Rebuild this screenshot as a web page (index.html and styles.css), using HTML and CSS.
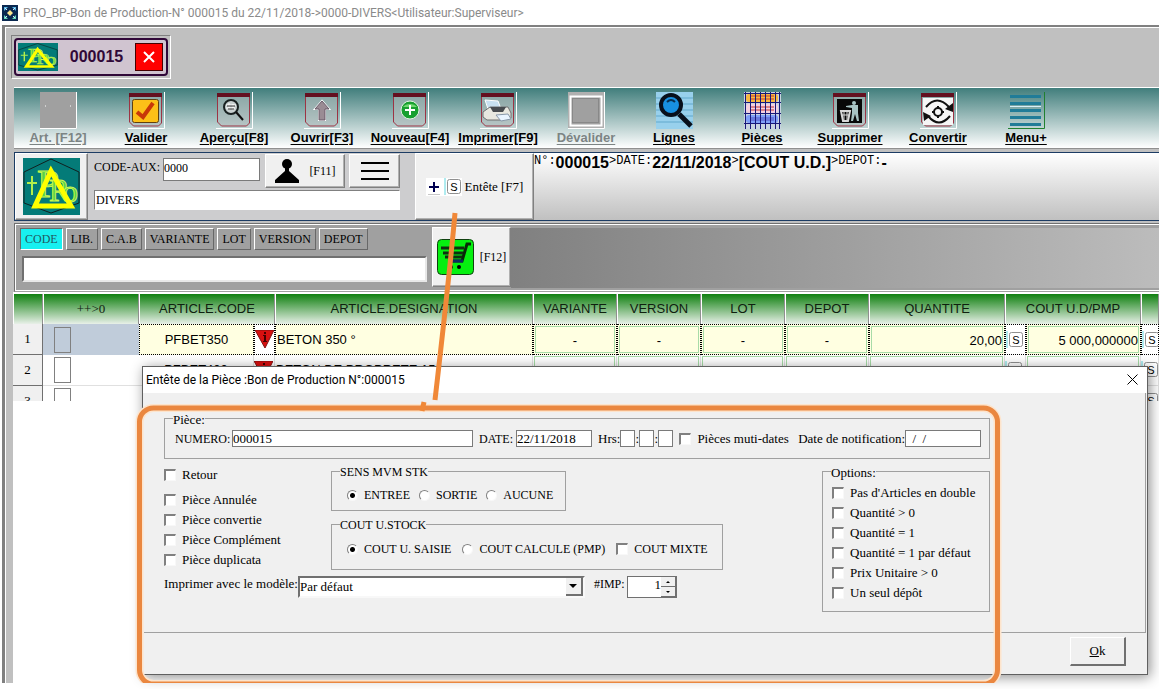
FILE: index.html
```
<!DOCTYPE html>
<html lang="fr">
<head>
<meta charset="utf-8">
<title>PRO_BP-Bon de Production</title>
<link rel="stylesheet" href="styles.css">
</head>
<body>
<svg class="defs" width="0" height="0" aria-hidden="true">
  <defs>
    <symbol id="logo" viewBox="0 0 57 57" preserveAspectRatio="none">
      <rect width="57" height="57" fill="#047b78"/>
      <path d="M28 1 56 14v31L28 55 1 45V14z" fill="none" stroke="#102020"/>
      <text x="14" y="39" font-size="40" class="logo-text">P</text>
      <text x="26" y="43" font-size="31" class="logo-text">R</text>
      <text x="39" y="44" font-size="32" class="logo-text">o</text>
      <path d="M4 25h10M9 18v19" stroke="#b4f04a" stroke-width="2"/>
      <path d="M28 13 12 48h36z" fill="none" stroke="#ff0" stroke-width="5"/>
    </symbol>
    <symbol id="sheet" viewBox="0 0 37 37">
      <path d="M0 36.5h36.5V0" fill="none" stroke="#fff"/>
      <path d="M1.500 3v27l4 4h25l3-3V3z" fill="#b4bcbc" fill-opacity=".55" stroke="#9c3444"/>
      <path d="M1 1h33v4H1z" fill="#641020"/>
    </symbol>
    <symbol id="warn" viewBox="0 0 19 19">
      <path d="M0 0h19L10 18z" fill="#d81010" stroke="#801010"/>
      <path d="M9 2h2v2H9zM8 5h3v6h1v1H8v-1h1V6H8z" fill="#400"/>
    </symbol>
    <symbol id="skey" viewBox="0 0 18 18">
      <path d="M1 0v17" stroke="#60d8e0"/>
      <rect x="3.500" y="1.500" width="13" height="14" rx="2" fill="#fff" stroke="#909090"/>
      <text x="10" y="13" text-anchor="middle" font-size="11" class="key-text">S</text>
    </symbol>
  </defs>
</svg>

<header class="titlebar">
  <svg width="16" height="16" viewBox="0 0 16 16"><rect width="16" height="16" fill="#0a2850"/><path d="M2 2h4L2 6zM14 2v4l-4-4z" fill="#58b8e8"/><path d="M2 14v-4l4 4zM14 14h-4l4-4z" fill="#60d8b8"/><path d="M8 5l3 3-3 3-3-3z" fill="#ffe890"/><path d="M3 3l2 2M13 3l-2 2M3 13l2-2M13 13l-2-2" stroke="#d8ecf8"/></svg>
  <h1>PRO_BP-Bon de Production-N° 000015 du 22/11/2018-&gt;0000-DIVERS&lt;Utilisateur:Superviseur&gt;</h1>
</header>

<main class="frame">
  <div class="docs">
    <div class="doc-slot"><div class="doc">
      <svg width="40" height="28"><use href="#logo" width="40" height="28"/></svg>
      <span class="doc-no">000015</span>
      <button class="doc-close" aria-label="Fermer"><svg width="12" height="12" viewBox="0 0 12 12"><path d="M1 1l10 10M11 1 1 11" stroke="#fff" stroke-width="2"/></svg></button>
    </div></div>
  </div>

  <nav class="toolbar">
    <button class="tool" disabled><svg width="37" height="37" viewBox="0 0 37 37"><rect width="37" height="37" fill="#a0a0a0"/><path d="M0 36.500h36.500V0" fill="none" stroke="#fff"/><path d="M5 14h1M30 14h1" stroke="#fff"/></svg>Art. [F12]</button>
    <button class="tool"><svg width="37" height="37" viewBox="0 0 37 37"><use href="#sheet"/><rect x="4.500" y="7.500" width="26" height="23" rx="2" fill="#fcc018" stroke="#604010"/><path d="M9 20l6 5L25 11" fill="none" stroke="#c83808" stroke-width="4"/></svg>Valider</button>
    <button class="tool"><svg width="37" height="37" viewBox="0 0 37 37"><use href="#sheet"/><circle cx="15" cy="15" r="7" fill="#c8d0d0" stroke="#182020" stroke-width="2"/><path d="M10 13h10M10 16h9M13 11v7M17 12v6" stroke="#fff"/><path d="M11 14h8M12 17h6" stroke="#333"/><path d="M20 20l7 8" stroke="#101010" stroke-width="2"/></svg>Aperçu[F8]</button>
    <button class="tool"><svg width="37" height="37" viewBox="0 0 37 37"><use href="#sheet"/><path d="M18 9l7 8h-4v11h-6V17h-4z" fill="#9a8c94" stroke="#fff" stroke-width="2"/><path d="M18 9l7 8h-4v11h-6V17h-4z" fill="#9a8c94" stroke="#685868"/></svg>Ouvrir[F3]</button>
    <button class="tool"><svg width="37" height="37" viewBox="0 0 37 37"><use href="#sheet"/><circle cx="18" cy="18" r="9" fill="#18a030" stroke="#e0f4e0"/><path d="M11 15a8 6 0 0 1 14 0z" fill="#70d870"/><path d="M13 18h10M18 13v10" stroke="#fff" stroke-width="2"/></svg>Nouveau[F4]</button>
    <button class="tool"><svg width="37" height="37" viewBox="0 0 37 37"><use href="#sheet"/><path d="M5 8l13 1 3 8H8z" fill="#c8e0f0" stroke="#fff"/><path d="M3 20l7-5h18l3 6v5l-8 2H7l-4-3z" fill="#e8e8e0" stroke="#707070"/><path d="M10 15h16l-3 5H13z" fill="#484c50"/><path d="M16 23l12-1 3 5-10 2z" fill="#e8f4ff" stroke="#8898a8"/></svg>Imprimer[F9]</button>
    <button class="tool" disabled><svg width="37" height="37" viewBox="0 0 37 37"><rect width="37" height="37" fill="#b0b0b0"/><rect x="2.500" y="4.500" width="31" height="29" fill="#a0a0a0" stroke="#fff" stroke-width="2"/><rect x="4.500" y="6.500" width="26" height="24" fill="none" stroke="#888"/><path d="M0 36.500h36.500V0" fill="none" stroke="#fff"/></svg>Dévalider</button>
    <button class="tool"><svg width="37" height="37" viewBox="0 0 37 37"><rect width="37" height="37" fill="#98d0ec"/><path d="M0 6h37M0 12h37M0 18h37M0 24h37M0 30h37" stroke="#60a8cc"/><circle cx="15" cy="13" r="10" fill="#1890e0" stroke="#08101c" stroke-width="4"/><path d="M11 10q4-4 8 0" stroke="#083050" stroke-width="2" fill="none"/><path d="M23 22l12 12" stroke="#08101c" stroke-width="5"/></svg>Lignes</button>
    <button class="tool"><svg width="37" height="37" viewBox="0 0 37 37"><rect width="37" height="37" fill="#c8d4e0"/><rect x="2" y="2" width="32" height="8" rx="3" fill="#f8b840"/><rect x="2" y="12" width="32" height="9" rx="3" fill="#f4d0e0"/><rect x="2" y="23" width="32" height="8" rx="3" fill="#80a0f8"/><path d="M6 4h24M6 7h24M6 15h24M6 18h24" stroke="#c03838"/><path d="M6 26h24M6 28h24" stroke="#5050c0"/><path d="M1.500 0v37M6.500 0v37M11.500 0v37M16.500 0v37M21.500 0v37M26.500 0v37M31.500 0v37M35.500 0v37M0 1.500h37M0 10.500h37M0 21.500h37M0 31.500h37" stroke="#181878"/></svg>Pièces</button>
    <button class="tool"><svg width="37" height="37" viewBox="0 0 37 37"><use href="#sheet"/><rect x="5" y="7" width="25" height="24" fill="#080808"/><path d="M9 19h9l-2 10h-5z" fill="none" stroke="#d8d8d8" stroke-width="2"/><path d="M10 23h7M12 19v9M15 19v9" stroke="#d8d8d8"/><circle cx="22" cy="11" r="2" fill="#a8c4c4"/><path d="M14 14l6-1h6v8l1 8h-2l-2-7-2 7h-2l1-8v-5l-6-1z" fill="#a8c4c4"/></svg>Supprimer</button>
    <button class="tool"><svg width="37" height="37" viewBox="0 0 37 37"><use href="#sheet"/><rect x="3" y="6" width="30" height="27" fill="#f6f6f6"/><path d="M6 15q11-13 23 0M30 24q-11 13-22 0" fill="none" stroke="#101010" stroke-width="2"/><path d="M33 11v9l-8-3zM3 20l8 4-7 5z" fill="#101010"/><circle cx="18" cy="20" r="4" fill="none" stroke="#101010" stroke-width="2"/><path d="M18 14v2M18 24v2M12 20h2M22 20h2" stroke="#101010" stroke-width="2"/></svg>Convertir</button>
    <button class="tool"><svg width="37" height="37" viewBox="0 0 37 37"><path d="M2 3h31v3H2zM2 10h31v3H2zM2 17h31v3H2zM2 24h31v3H2zM2 31h31v3H2z" fill="#207c98"/><path d="M2 14.500h31" stroke="#d8f0f8"/><path d="M0 36.500h36.500V0" fill="none" stroke="#208030"/></svg>Menu+</button>
  </nav>

  <section class="head">
    <button class="face logo-btn" aria-label="Logo"><svg width="57" height="57"><use href="#logo" width="57" height="57"/></svg></button>
    <div class="client">
      <div class="client-row">
        <label for="aux">CODE-AUX:</label><input id="aux" class="field aux" value="0000">
        <button class="face f11"><svg width="26" height="26" viewBox="0 0 26 26"><circle cx="13" cy="6" r="5"/><path d="M11 10h4v3l10 9v3H1v-3l10-9z"/></svg>[F11]</button>
        <button class="face burger" aria-label="Menu"><svg width="28" height="20" viewBox="0 0 28 20"><path d="M0 2h28M0 10h28M0 18h28" stroke="#000" stroke-width="2"/></svg></button>
      </div>
      <input class="field client-name" aria-label="Client" value="DIVERS">
    </div>
    <button class="face entete"><svg width="36" height="18" viewBox="0 0 36 18"><rect width="36" height="18" fill="#fff"/><path d="M3 9h10M8 4v10" stroke="#000050" stroke-width="2"/><path d="M2 16.500h12" stroke="#c8c8c8"/><use href="#skey" x="18" width="18" height="18"/></svg>Entête [F7]</button>
    <p class="info"><small>N°:</small><b>000015</b><small>&gt;DATE:</small><b>22/11/2018</b><small>&gt;</small><b>[COUT U.D.]</b><small>&gt;DEPOT:</small><b>-</b></p>
  </section>

  <section class="search">
    <div class="search-left">
      <div class="modes">
        <button class="mode active">CODE</button><button class="mode">LIB.</button><button class="mode">C.A.B</button><button class="mode">VARIANTE</button><button class="mode">LOT</button><button class="mode">VERSION</button><button class="mode">DEPOT</button>
      </div>
      <input class="query" aria-label="Recherche">
    </div>
    <button class="face cart"><svg width="37" height="36" viewBox="0 0 37 36"><rect x=".5" y=".5" width="36" height="35" rx="4" fill="#06f010" stroke="#104010"/><path d="M34 5h-4l-5 17H12" fill="none" stroke="#082808" stroke-width="3"/><path d="M4 9h23M6 14h20M8 18h17" stroke="#103010" stroke-width="3"/><path d="M11 22h15" stroke="#102860" stroke-width="3"/><circle cx="14" cy="28" r="2"/><circle cx="22" cy="28" r="2"/></svg>[F12]</button>
    <div class="search-fill"></div>
  </section>

  <div class="grid">
    <table>
      <colgroup><col class="c-num"><col class="c-sel"><col class="c-code"><col class="c-ico"><col class="c-des"><col class="c-s"><col class="c-s"><col class="c-s"><col class="c-s"><col class="c-qty"><col class="c-key"><col class="c-cost"><col></colgroup>
      <thead><tr><th></th><th class="serif">++&gt;0</th><th colspan="2">ARTICLE.CODE</th><th>ARTICLE.DESIGNATION</th><th>VARIANTE</th><th>VERSION</th><th>LOT</th><th>DEPOT</th><th>QUANTITE</th><th colspan="2">COUT U.D/PMP</th><th></th></tr></thead>
      <tbody>
        <tr class="current"><td class="num">1</td><td class="sel"><input type="checkbox" class="pick" aria-label="Ligne 1"></td><td class="mid">PFBET350</td><td class="ico"><svg width="19" height="19"><use href="#warn"/></svg></td><td>BETON 350 °</td><td class="box"><span>-</span></td><td class="box"><span>-</span></td><td class="box"><span>-</span></td><td class="box"><span>-</span></td><td class="box right"><span>20,00</span></td><td class="ico"><svg width="18" height="18"><use href="#skey"/></svg></td><td class="box right"><span>5 000,000000</span></td><td class="ico"><svg width="18" height="18"><use href="#skey"/></svg></td></tr>
        <tr><td class="num">2</td><td class="sel"><input type="checkbox" class="pick" aria-label="Ligne 2"></td><td class="mid">PFBET400</td><td class="ico"><svg width="19" height="19"><use href="#warn"/></svg></td><td>BETON DE PROPRETE 150</td><td class="box"><span>-</span></td><td class="box"><span>-</span></td><td class="box"><span>-</span></td><td class="box"><span>-</span></td><td class="box right"><span>10,00</span></td><td class="ico"><svg width="18" height="18"><use href="#skey"/></svg></td><td class="box right"><span>3 500,000000</span></td><td class="ico"><svg width="18" height="18"><use href="#skey"/></svg></td></tr>
        <tr><td class="num">3</td><td class="sel"><input type="checkbox" class="pick" aria-label="Ligne 3"></td><td></td><td></td><td></td><td></td><td></td><td></td><td></td><td></td><td></td><td></td><td class="ico"><svg width="18" height="18"><use href="#skey"/></svg></td></tr>
      </tbody>
    </table>
  </div>
  <div class="blank"></div>
</main>

<section class="dialog" role="dialog" aria-labelledby="dlg-title">
  <header class="dlg-head">
    <h2 id="dlg-title">Entête de la Pièce :Bon de Production N°:000015</h2>
    <button class="dlg-close" aria-label="Fermer"><svg width="11" height="11" viewBox="0 0 11 11"><path d="M.5.500l10 10M10.500.5l-10 10" stroke="#000"/></svg></button>
  </header>
  <form class="dlg-body">
    <fieldset class="piece">
      <legend>Pièce:</legend>
      <div class="line">
        <label for="numero" class="caps l-num">NUMERO:</label><input id="numero" class="field w-num" value="000015">
        <label for="date" class="caps gap l-date">DATE:</label><input id="date" class="field w-date" value="22/11/2018">
        <label for="h" class="gap">Hrs:</label><input id="h" class="field w-h"><span class="colon">:</span><input class="field w-h" aria-label="Minutes"><span class="colon">:</span><input class="field w-h" aria-label="Secondes">
        <label class="check gap"><input type="checkbox">Pièces muti-dates</label>
        <label for="notif" class="l-notif">Date de notification:</label><input id="notif" class="field w-date" value="&nbsp; /&nbsp; /">
      </div>
    </fieldset>
    <div class="lower">
      <div class="left">
        <div class="left-top">
          <div class="flags">
            <label class="check"><input type="checkbox">Retour</label>
            <label class="check"><input type="checkbox">Pièce Annulée</label>
            <label class="check"><input type="checkbox">Pièce convertie</label>
            <label class="check"><input type="checkbox">Pièce Complément</label>
            <label class="check"><input type="checkbox">Pièce duplicata</label>
          </div>
          <div class="groups">
            <fieldset class="sens">
              <legend class="caps">SENS MVM STK</legend>
              <div class="radios"><label class="check caps"><input type="radio" name="sens" checked>ENTREE</label><label class="check caps"><input type="radio" name="sens">SORTIE</label><label class="check caps"><input type="radio" name="sens">AUCUNE</label></div>
            </fieldset>
            <fieldset class="cout">
              <legend class="caps">COUT U.STOCK</legend>
              <div class="radios"><label class="check caps"><input type="radio" name="cout" checked>COUT U. SAISIE</label><label class="check caps"><input type="radio" name="cout">COUT CALCULE (PMP)</label><label class="check caps"><input type="checkbox">COUT MIXTE</label></div>
            </fieldset>
          </div>
        </div>
        <div class="print">
          <label for="model">Imprimer avec le modèle:</label>
          <span class="combo"><select id="model"><option>Par défaut</option></select><span class="arrow"><svg width="8" height="4" viewBox="0 0 8 4"><path d="M0 0h8L4 4z"/></svg></span></span>
          <label for="imp" class="imp">#IMP:</label>
          <span class="spin"><input id="imp" type="number" value="1"><span class="steps"><button type="button" aria-label="Plus"><svg width="4" height="2" viewBox="0 0 4 2"><path d="M0 2h4L2 0z"/></svg></button><button type="button" aria-label="Moins"><svg width="4" height="2" viewBox="0 0 4 2"><path d="M0 0h4L2 2z"/></svg></button></span></span>
        </div>
      </div>
      <fieldset class="options">
        <legend>Options:</legend>
        <label class="check"><input type="checkbox">Pas d'Articles en double</label>
        <label class="check"><input type="checkbox">Quantité &gt; 0</label>
        <label class="check"><input type="checkbox">Quantité = 1</label>
        <label class="check"><input type="checkbox">Quantité = 1 par défaut</label>
        <label class="check"><input type="checkbox">Prix Unitaire &gt; 0</label>
        <label class="check"><input type="checkbox">Un seul dépôt</label>
      </fieldset>
    </div>
  </form>
  <footer class="dlg-foot"><button class="ok"><u>O</u>k</button></footer>
</section>

<svg class="marks" width="1010" height="683" viewBox="0 0 1010 683" aria-hidden="true">
  <rect x="139.500" y="408" width="858" height="276" rx="14" fill="none" stroke="#fde4cc" stroke-width="8"/>
  <rect x="139.500" y="408" width="858" height="276" rx="14" fill="none" stroke="#ea8740" stroke-width="5"/>
  <path d="M455 213Q450 270 435 400" fill="none" stroke="#f08838" stroke-width="5"/>
  <path d="M424 402l-2 9" stroke="#f08838" stroke-width="5"/>
</svg>
</body>
</html>
```
FILE: styles.css
```
* { box-sizing: border-box; }
body {
  margin: 0;
  position: relative;
  min-height: 100vh;
  display: flex;
  flex-direction: column;
  background: #fff;
  color: #000;
  font: 13px/16px "Liberation Serif", serif;
  overflow: hidden;
}
button, input, select { font: inherit; color: inherit; margin: 0; padding: 0; border-radius: 0; }
svg { display: block; flex: none; }
.defs { position: absolute; }
.logo-text { font-family: "Liberation Serif", serif; fill: #58d048; stroke: #c8f850; }
.key-text { font-family: "Liberation Sans", sans-serif; }

/* window */
.titlebar { display: flex; align-items: center; gap: 5px; height: 25px; padding: 0 2px; }
.titlebar h1 { margin: 0; font: 12px/16px Roboto, sans-serif; color: #8a8a8a; white-space: nowrap; }
.frame {
  flex: 1;
  display: flex;
  flex-direction: column;
  margin: 0 0 6px 2px;
  padding-left: 8px;
  background: #c0c0c0;
  border-top: 2px solid #808080;
  border-left: 3px solid #808080;
  box-shadow: inset 1px 1px #fff;
}
.docs { height: 60px; padding: 8px 0 0; }
.doc-slot { display: inline-block; margin-left: -2px; padding: 2px; border: 1px solid; border-color: #808080 #fff #fff #808080; }
.doc { display: flex; align-items: center; height: 38px; width: 154px; padding: 0 3px 0 2px; background: #d0c4d0; border: 2px solid #300838; border-radius: 4px; }
.doc-no { flex: 1; text-align: center; font: bold 16px/18px "Liberation Sans", sans-serif; color: #300838; }
.doc-close { width: 28px; height: 28px; display: grid; place-items: center; background: #f00; border: 1px solid #400; }

.toolbar { display: flex; height: 62px; margin-left: 1px; padding-top: 4px; background: linear-gradient(#417e7c, #fff); border-top: 1px solid #fff; border-bottom: 1px solid #909090; overflow: hidden; }
.tool { flex: none; width: 88px; display: flex; flex-direction: column; align-items: center; background: none; border: 0; font: bold 13px/18px "Liberation Sans", sans-serif; text-decoration: underline; text-underline-offset: 2px; white-space: nowrap; }
.tool:disabled { color: #7c8484; }

.face { display: flex; align-items: center; justify-content: center; background: #f0f0f0; border: 1px solid; border-color: #fff #808080 #808080 #fff; box-shadow: inset -1px -1px #b0b0b0; }
.field { min-width: 0; background: #fff; border: 1px solid #7a7a7a; }

.head { display: flex; height: 69px; margin: 3px 0 0 1px; background: #cdcdcf; border: 1px solid #1c3c64; border-right: 0; }
.logo-btn { width: 73px; }
.client { display: flex; flex-direction: column; gap: 2px; width: 327px; padding: 1px 15px 0 6px; }
.client-row { display: flex; align-items: flex-start; height: 34px; }
.client-row label { width: 69px; padding-top: 5px; font-size: 12px; white-space: nowrap; }
.aux { width: 97px; height: 23px; margin-top: 4px; padding-bottom: 3px; font-size: 12px; }
.f11 { width: 80px; height: 34px; margin-left: 5px; gap: 9px; font-size: 12px; }
.burger { width: 51px; height: 34px; margin-left: 4px; }
.client-name { height: 20px; padding-left: 1px; font-size: 12px; border-color: #808080 #fff #fff #808080; }
.entete { width: 119px; gap: 3px; }
.info { flex: 1; display: flex; margin: 0; padding-top: 1px; background: linear-gradient(#fff, #c0c0c0); white-space: nowrap; }
.info small { font: 12px/14px "Liberation Mono", monospace; }
.info b { font: bold 16px/18px "Liberation Sans", sans-serif; }

.search { display: flex; height: 69px; margin: 2px 0 0 1px; padding: 3px 0 3px 5px; background: #a0a0a0; border: 1px solid #707070; border-right: 0; border-bottom-color: #a0a0a0; box-shadow: inset 1px 1px #fff, inset 0 -1px #fff; }
.search-left { display: flex; flex-direction: column; width: 407px; gap: 6px; margin-right: 5px; }
.modes { display: flex; gap: 3px; padding-top: 1px; }
.mode { height: 22px; padding: 0 4px; font-size: 12px; line-height: 14px; background: #a0a0a0; border: 1px solid; border-color: #fff #686868 #686868 #fff; white-space: nowrap; }
.mode.active { background: #18f0f0; color: #205860; border-color: #686868 #fff #fff #686868; }
.query { margin-left: 2px; height: 26px; background: #fff; border: 2px solid; border-color: #707070 #e8e8e8 #e8e8e8 #707070; }
.cart { width: 79px; height: 60px; gap: 6px; font-size: 12px; }
.search-fill { flex: 1; margin-top: 1px; background: linear-gradient(90deg, #808080, #bcbcbc); }

/* article lines */
.grid { max-height: 109px; padding-top: 2px; overflow: hidden; background: #fff; }
table { width: 100%; table-layout: fixed; border-collapse: separate; border-spacing: 0; font: 13px/16px "Liberation Sans", sans-serif; }
.c-num { width: 30px; } .c-sel { width: 96px; } .c-code { width: 115px; } .c-ico { width: 21px; } .c-des { width: 258px; }
.c-s { width: 84px; } .c-qty { width: 136px; } .c-key { width: 21px; } .c-cost { width: 115px; }
th { height: 30px; padding: 0; font-weight: normal; background: linear-gradient(#108010, #e8f0e8); border-right: 1px solid #909090; border-left: 1px solid #fff; color: #102010; white-space: nowrap; }
.serif, .num { font-family: "Liberation Serif", serif; }
td { height: 31px; padding: 0 2px; border-right: 1px solid #e0e0e0; border-bottom: 1px solid #e0e0e0; white-space: nowrap; overflow: hidden; }
td:nth-child(5) { padding-left: 1px; }
td.num { text-align: center; background: #f0f0f0; border-right: 1px solid #707070; border-bottom: 1px solid #707070; }
td.sel { padding-left: 11px; border-right: 0; }
td.mid { text-align: center; }
td.ico { padding: 0; }
td.box { padding: 1px; }
td.box span { display: block; height: 28px; padding: 6px 0; border: 1px solid #a8dca8; text-align: center; }
td.right span { text-align: right; }
.current td { background: #ffffe1; border: 1px dotted #000; }
.current td.num { background: #f0f0f0; border: solid #707070; border-width: 0 1px 1px 0; }
.current td.sel { background: #c0ccda; border: 0; }
.current .ico { background: #fff; }
.current td.box span { height: 27px; }
.pick { appearance: none; display: block; width: 17px; height: 26px; background: #fff; border: 1px solid #808080; }
.current .pick { background: #c0ccda; }
.blank { flex: 1; background: #fff; }

/* header dialog */
.dialog { position: absolute; top: 366px; left: 142px; right: 11px; background: #f0f0f0; border: 1px solid #606060; box-shadow: 2px 2px 12px rgba(0, 0, 0, .45); }
.dlg-head { display: flex; align-items: center; justify-content: space-between; height: 26px; padding: 0 9px 1px 3px; background: #fff; }
.dlg-head h2 { margin: 0; font: 12px/16px Roboto, sans-serif; white-space: nowrap; }
.dlg-close { background: none; border: 0; }
.dlg-body { min-height: 240px; margin: 0 1px; padding: 17px 20px 0; border: solid #a0a0a0; border-width: 0 1px 1px 0; white-space: nowrap; }
fieldset { margin: 0; padding: 4px 8px; min-width: 0; border: 1px solid #a0a0a0; }
legend { padding: 0; height: 16px; line-height: 19px; }
.caps { font-size: 12px; }
.piece { width: 826px; padding-bottom: 11px; }
.line { display: flex; align-items: center; height: 17px; padding-left: 2px; }
.line .field { height: 17px; line-height: 15px; }
.line > .gap { margin-left: 6px; }
.l-num { width: 57px; }
.l-date { width: 37px; }
.l-notif { margin-left: auto; }
.w-num { width: 241px; }
.w-date { width: 76px; }
.w-h { width: 15px; }
.colon { width: 4px; }
.check { display: flex; align-items: center; height: 20px; }
.check input { appearance: none; flex: none; width: 12px; height: 12px; margin-right: 6px; background: #fff; border: solid; border-width: 2px 1px 1px 2px; border-color: #808080 #f8f8f8 #f8f8f8 #808080; }
.check input[type="radio"] { width: 11px; height: 11px; border-width: 1px; border-radius: 50%; }
.check input[type="radio"]:checked { background: radial-gradient(circle, #000 2px, #fff 3px); }
.lower { display: flex; justify-content: space-between; align-items: flex-start; width: 826px; margin-top: 4px; }
.left { display: flex; flex-direction: column; gap: 6px; }
.left-top { display: flex; }
.flags { width: 167px; padding-top: 2px; }
.flags .check:first-child { margin-bottom: 5px; }
.groups { display: flex; flex-direction: column; align-items: flex-start; gap: 5px; }
.sens { width: 235px; padding: 8px 8px 7px; }
.cout { width: 392px; padding: 8px 8px 11px; }
.radios { display: flex; gap: 9px; padding-left: 7px; }
.cout .radios { gap: 11px; }
.radios .check { height: 16px; }
.cout .check { height: 18px; }
.print { display: flex; height: 22px; }
.combo { display: flex; width: 287px; background: #fff; border: 2px solid; border-color: #707070 #f8f8f8 #f8f8f8 #707070; }
.combo select { flex: 1; appearance: none; background: none; border: 0; }
.arrow { display: grid; place-items: center; width: 17px; background: #f0f0f0; border: solid #707070; border-width: 0 2px 2px 0; }
.imp { width: 33px; margin-left: 9px; font-size: 12px; }
.spin { display: flex; width: 50px; background: #fff; border: 1px solid #707070; }
.spin input { flex: 1; min-width: 0; appearance: textfield; border: 0; background: none; text-align: right; height: 16px; }
.spin input::-webkit-inner-spin-button { appearance: none; }
.steps { display: flex; flex-direction: column; width: 15px; }
.steps button { flex: 1; display: grid; place-items: center; background: #f0f0f0; border: solid #707070; border-width: 0 1px 1px 0; }
.options { width: 168px; padding-bottom: 8px; }
.options .check { padding-left: 1px; }
.dlg-foot { display: flex; justify-content: flex-end; padding: 4px 21px 8px; }
.ok { width: 56px; height: 29px; background: #f0f0f0; border: solid; border-width: 1px 2px 2px 1px; border-color: #fff #707070 #707070 #fff; }

.marks { position: absolute; top: 0; left: 0; pointer-events: none; }
```
